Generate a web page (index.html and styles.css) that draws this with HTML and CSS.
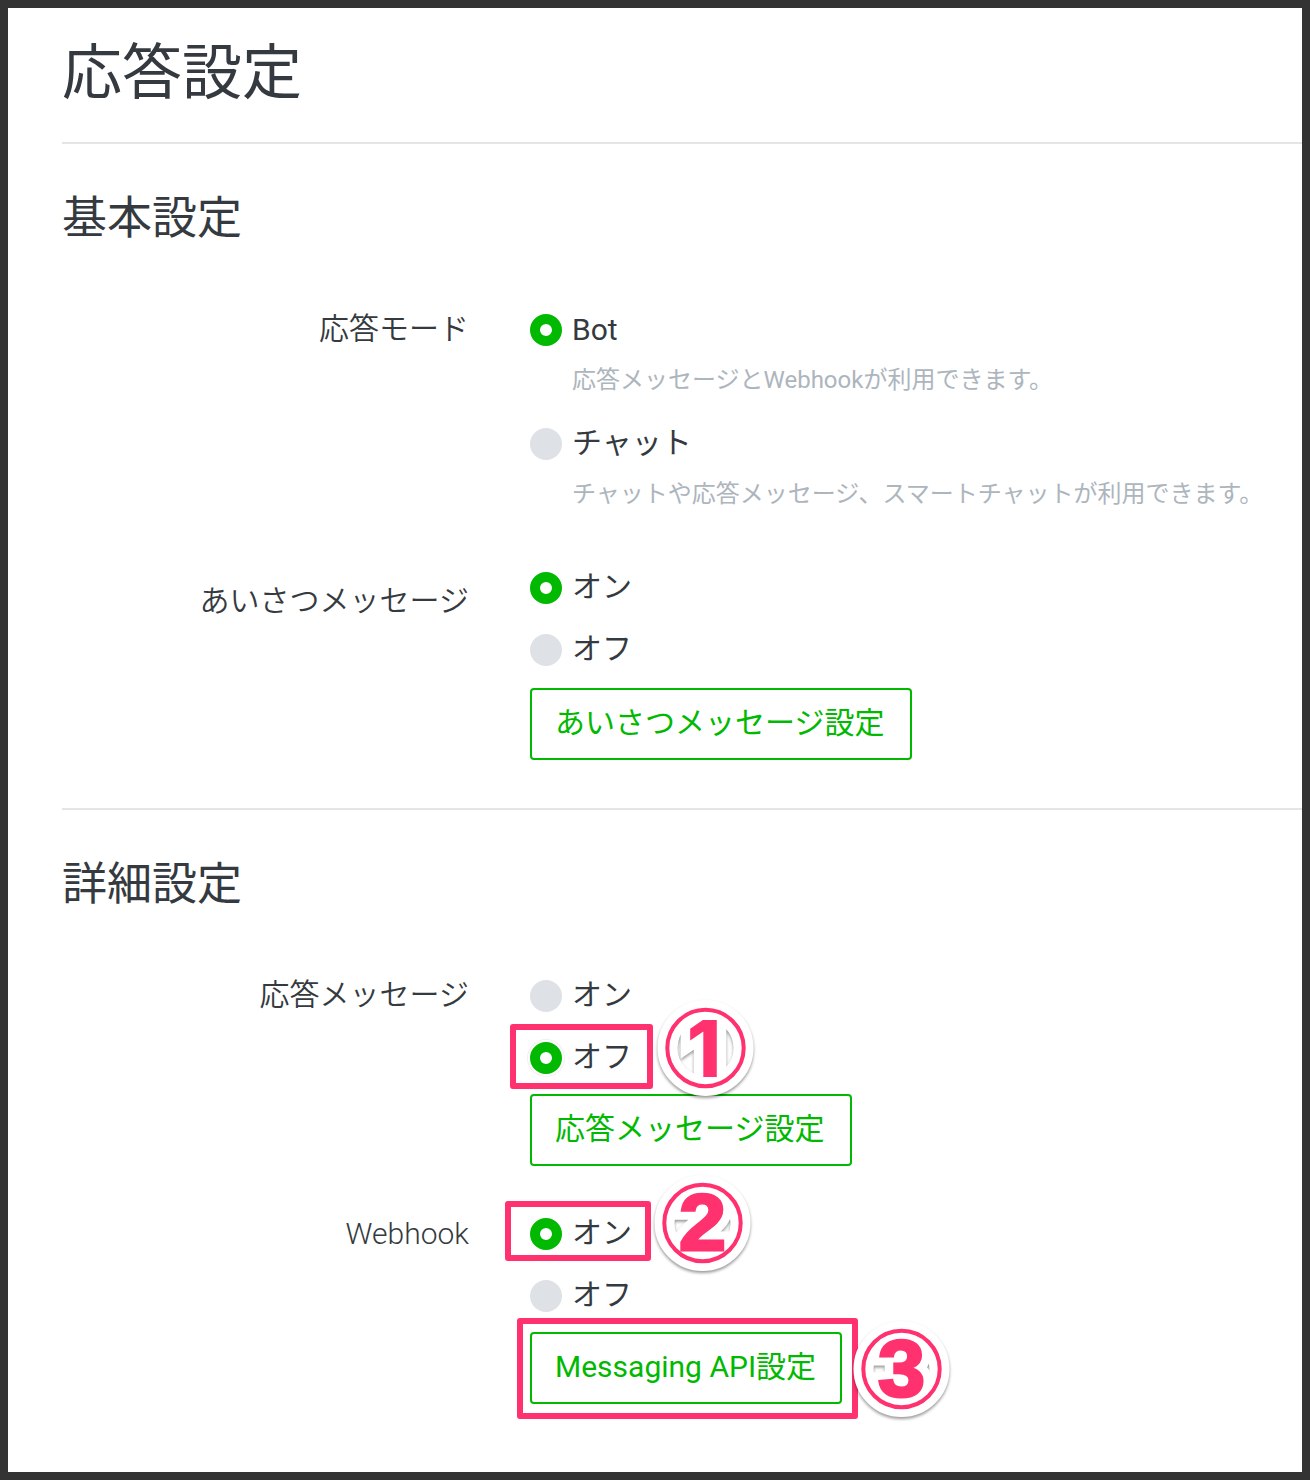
FILE: index.html
```html
<!DOCTYPE html>
<html lang="ja">
<head>
<meta charset="utf-8">
<title>応答設定</title>
<link rel="stylesheet" href="styles.css">
</head>
<body>
<main class="page">
  <header class="page-header"><h1 class="page-title">応答設定</h1></header>

  <section class="section">
    <h2 class="section-title">基本設定</h2>
    <div class="row">
      <div class="label">応答モード</div>
      <div class="field">
        <div class="option latin"><span class="radio checked"></span><span class="text">Bot</span></div>
        <p class="help">応答メッセージとWebhookが利用できます。</p>
        <div class="option spaced"><span class="radio"></span><span class="text">チャット</span></div>
        <p class="help">チャットや応答メッセージ、スマートチャットが利用できます。</p>
      </div>
    </div>
    <div class="row greeting">
      <div class="label">あいさつメッセージ</div>
      <div class="field">
        <div class="option"><span class="radio checked"></span><span class="text">オン</span></div>
        <div class="option"><span class="radio"></span><span class="text">オフ</span></div>
        <a class="button">あいさつメッセージ設定</a>
      </div>
    </div>
  </section>

  <section class="section detail">
    <h2 class="section-title">詳細設定</h2>
    <div class="row">
      <div class="label">応答メッセージ</div>
      <div class="field">
        <div class="option"><span class="radio"></span><span class="text">オン</span></div>
        <div class="option"><span class="radio checked haloed"></span><span class="text">オフ</span></div>
        <a class="button">応答メッセージ設定</a>
      </div>
    </div>
    <div class="row webhook">
      <div class="label">Webhook</div>
      <div class="field">
        <div class="option"><span class="radio checked"></span><span class="text">オン</span></div>
        <div class="option"><span class="radio"></span><span class="text">オフ</span></div>
        <a class="button api-button">Messaging API設定</a>
      </div>
    </div>
  </section>

  <div class="frame frame-1"></div>
  <div class="frame frame-2"></div>
  <div class="frame frame-3"></div>
  <svg class="badge badge-1" viewBox="-55.5 -55 110 110">
    <g class="halo"><circle r="38"/><text x="-1.5" y="29">1</text></g>
    <circle class="ring" r="38.2"/><text class="digit" x="-1.5" y="29">1</text>
  </svg>
  <svg class="badge badge-2" viewBox="-55.5 -55 110 110">
    <g class="halo"><circle r="38"/><text y="27" textLength="47" lengthAdjust="spacingAndGlyphs">2</text></g>
    <circle class="ring" r="38.2"/><text class="digit" y="27" textLength="47" lengthAdjust="spacingAndGlyphs">2</text>
  </svg>
  <svg class="badge badge-3" viewBox="-55.5 -55 110 110">
    <g class="halo"><circle r="38"/><text y="27.3" textLength="47" lengthAdjust="spacingAndGlyphs">3</text></g>
    <circle class="ring" r="38.2"/><text class="digit" y="27.3" textLength="47" lengthAdjust="spacingAndGlyphs">3</text>
  </svg>
</main>
</body>
</html>
```
FILE: styles.css
```css
* { box-sizing: border-box; }
body {
  margin: 0;
  background: #fff;
  color: #353a40;
  font-family: Roboto, "Noto Sans CJK JP", sans-serif;
}
.page {
  position: relative;
  width: 1310px;
  height: 1480px;
  border: 8px solid #333;
  overflow: hidden;
}
.page-header {
  height: 136px;
  margin-left: 54px;
  padding-top: 36px;
  border-bottom: 2px solid #e5e5e5;
}
.page-title {
  margin: 0;
  font-size: 60px;
  line-height: 60px;
  font-weight: 400;
}
.section {
  height: 666px;
  margin-left: 54px;
  padding-top: 52px;
  border-bottom: 2px solid #e5e5e5;
}
.section.detail { border-bottom: 0; }
.section-title {
  margin: 0 0 58px;
  font-size: 45px;
  line-height: 45px;
  font-weight: 400;
}
.row {
  display: grid;
  grid-template-columns: 407px 1fr;
  column-gap: 61px;
}
.greeting { margin-top: 46px; }
.webhook { margin-top: 37px; }
.label {
  text-align: right;
  font-size: 30px;
  line-height: 60px;
  font-weight: 350;
}
.greeting .label { padding-top: 14px; }
.webhook .label { padding-top: 1px; }
.field {
  display: flex;
  flex-direction: column;
  align-items: flex-start;
}
.option {
  display: flex;
  align-items: center;
  gap: 10px;
  height: 62px;
  font-size: 30px;
}
.option.spaced { margin-top: 16px; }
.text { line-height: 56px; padding-bottom: 2px; }
.latin .text { padding-bottom: 0; }
.radio {
  width: 32px;
  height: 32px;
  border-radius: 50%;
  background: #dee2e6;
}
.radio.checked { background: #fff; border: 10px solid #00b900; }
.radio.haloed { box-shadow: 0 0 0 2px #fff, 0 0 0 3px #f0f0f0; }
.help {
  margin: 0 0 0 42px;
  font-size: 24px;
  line-height: 38px;
  height: 36px;
  color: #adb5bd;
  white-space: nowrap;
}
.button {
  height: 72px;
  margin-top: 5px;
  padding: 0 26px 0 23px;
  border: 2px solid #00b900;
  border-radius: 4px;
  color: #00b900;
  font-size: 30px;
  line-height: 66px;
  white-space: nowrap;
}
.api-button { padding-right: 24px; }
.greeting .button { margin-top: 7px; }

/* Step annotations laid over the form */
.frame {
  position: absolute;
  border: 6px solid #ff316f;
  border-radius: 3px;
}
.frame-1 { left: 501.5px; top: 1016px; width: 143px; height: 65px; }
.frame-2 { left: 497px; top: 1193px; width: 146px; height: 60px; }
.frame-3 { left: 509px; top: 1310px; width: 341px; height: 101px; }
.badge {
  position: absolute;
  width: 110px;
  height: 110px;
  font-family: "Liberation Sans", sans-serif;
  font-size: 79px;
  font-weight: 700;
  text-anchor: middle;
}
.badge-1 {
  left: 642px;
  top: 985px;
  font-family: Inter, sans-serif;
  font-size: 78px;
  font-weight: 800;
}
.badge-2 { left: 639px; top: 1160px; }
.badge-3 { left: 838px; top: 1306px; }
.halo { filter: drop-shadow(0 2px 1.5px rgba(0, 0, 0, .4)); }
.halo circle { fill: none; stroke: #fff; stroke-width: 20; }
.halo text { fill: #fff; stroke: #fff; stroke-width: 19; }
.ring { fill: none; stroke: #ff316f; stroke-width: 4; }
.digit { fill: #ff316f; stroke: #ff316f; stroke-width: 3; }
.badge-1 .digit { stroke-width: 0; }
```
